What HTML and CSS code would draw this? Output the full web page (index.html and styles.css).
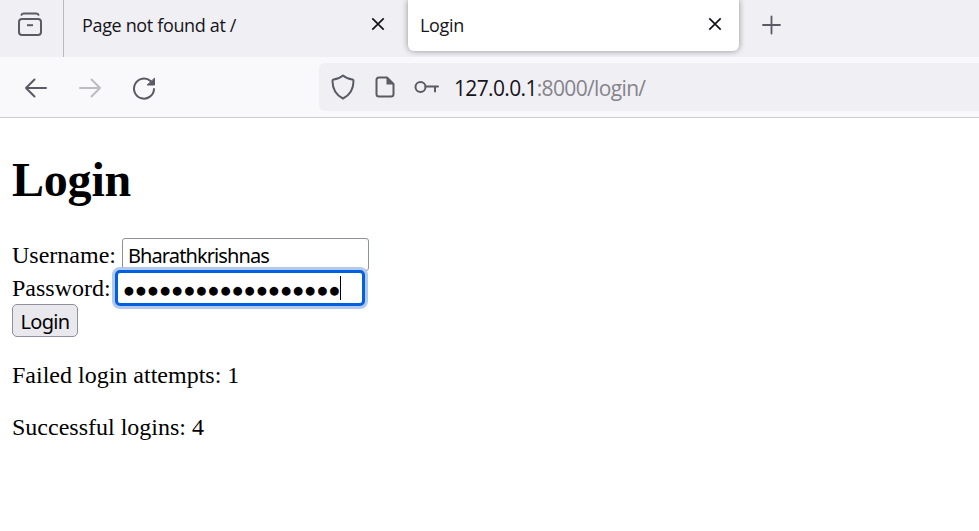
FILE: index.html
```html
<!DOCTYPE html>
<html lang="en">
<head>
<meta charset="utf-8">
<title>Login</title>
<link rel="stylesheet" href="styles.css">
</head>
<body>
<div class="tabs">
  <div class="view">
    <svg width="26" height="26" viewBox="0 0 26 26" fill="none" stroke="#5b5b66" stroke-width="2" stroke-linecap="round"><path d="M4.500 3.800Q5 2.500 6.800 2.500H19.200Q21 2.500 21.500 3.800"/><rect x="2" y="8" width="22" height="16" rx="3"/><path d="M10 14.200H16" stroke-linecap="butt"/></svg>
  </div>
  <div class="tab"><span class="t1">Page not found at /</span>
    <svg class="x" width="14" height="14" viewBox="0 0 14 14"><path d="M1.300 1.300L12.700 12.700M12.700 1.300L1.300 12.700"/></svg>
  </div>
  <div class="tab active"><span class="t2">Login</span>
    <svg class="x" width="14" height="14" viewBox="0 0 14 14"><path d="M1.300 1.300L12.700 12.700M12.700 1.300L1.300 12.700"/></svg>
  </div>
  <svg class="plus" width="20" height="20" viewBox="0 0 20 20" stroke="#5b5b66" stroke-width="1.8" stroke-linecap="round"><path d="M10.500 1.500V18.500M2 10H19"/></svg>
</div>
<div class="toolbar">
  <svg class="nav" width="24" height="24" viewBox="0 0 24 24"><path d="M22 12H2M10.500 3.500L2 12L10.500 20.500"/></svg>
  <svg class="nav off" width="24" height="24" viewBox="0 0 24 24"><path d="M2 12H22M13.500 3.500L22 12L13.500 20.500"/></svg>
  <svg class="nav" width="24" height="24" viewBox="0 0 24 24"><path d="M22 13A10 10 0 1 1 18.600 5.100"/><path d="M22.500 2.500V9H15.500Z" fill="#5b5b66" stroke-width="1"/></svg>
  <div class="url">
    <svg class="shield" width="24" height="26" viewBox="0 0 24 26"><path d="M12 1.500C9.500 3.800 6 5.100 2.500 5.500Q1.500 5.700 1.500 7C1.500 15 5 21 12 24.500C19 21 22.500 15 22.500 7Q22.500 5.700 21.500 5.500C18 5.100 14.500 3.800 12 1.500Z"/></svg>
    <svg class="page" width="20" height="22" viewBox="0 0 20 22"><path d="M4 1.500H12L18.500 8V18Q18.500 20.500 16 20.500H4Q1.500 20.500 1.500 18V4Q1.500 1.500 4 1.500Z"/><path d="M11.500 1V8.500H19Z" fill="#5b5b66" stroke="none"/></svg>
    <svg class="key" width="26" height="14" viewBox="0 0 26 14"><circle cx="6.500" cy="7" r="5"/><path d="M11.500 6.500H24M21 6.500V11.500"/></svg>
    <span class="addr"><b>127.0.0.1</b>:8000/login/</span>
  </div>
</div>
<main>
  <h1>Login</h1>
  <form>
    <div class="row"><label for="u">Username:</label><input id="u" class="user" type="text" value="Bharathkrishnas"></div>
    <div class="row"><span>Password:</span><div class="pass"><span class="dots">●●●●●●●●●●●●●●●●●●</span><i class="caret"></i></div></div>
    <button type="button">Login</button>
  </form>
  <p>Failed login attempts: 1</p>
  <p>Successful logins: 4</p>
</main>
</body>
</html>
```
FILE: styles.css
```css
* { box-sizing: border-box; }
body { margin: 0; background: #fff; height: 531px; overflow: hidden; font: 24px/27px "Liberation Serif", serif; color: #000; }
svg { display: block; flex: none; fill: none; }
.tabs { height: 57px; background: #f0eff4; display: flex; font: 18px/24px "Open Sans", sans-serif; color: #15141a; overflow: hidden; }
.view { width: 64px; height: 57px; border-right: 1px solid #b9b8c0; padding: 11px 0 0 17px; }
.tab { width: 332px; height: 51px; margin-right: 12px; padding: 0 11px 3px 18px; display: flex; align-items: center; justify-content: space-between; }
.tab.active { width: 331px; background: #fff; border-radius: 0 0 6px 6px; box-shadow: 0 0 6px rgba(0,0,0,.4); padding: 0 17px 3px 12px; }
.t1, .t2 { letter-spacing: -.35px; padding-top: 1px; }
.x { stroke: #15141a; stroke-width: 1.7; }
.plus { margin: 15px 0 0 10px; }
.toolbar { height: 61px; background: #f9f9fb; border-bottom: 1px solid #ccccd0; padding: 6px 0 6px 24px; display: flex; align-items: center; gap: 30px; }
.nav { stroke: #5b5b66; stroke-width: 2; stroke-linecap: round; stroke-linejoin: round; margin-top: 2px; }
.off { stroke: #bcbcc4; }
.url { flex: 1; height: 48px; margin-left: 133px; background: #f0eff4; border-radius: 6px 0 0 6px; display: flex; align-items: center; padding-left: 12px; }
.url svg { stroke: #5b5b66; stroke-width: 2; stroke-linejoin: round; stroke-linecap: round; }
.page { margin-left: 20px; }
.key { margin-left: 19px; }
.addr { margin-left: 14px; font: 21px/30px "Open Sans", sans-serif; letter-spacing: -.65px; color: #85848b; padding-top: 2px; }
.addr b { font-weight: 400; color: #15141a; }
main { padding: 35px 12px 0; }
h1 { font-size: 48px; line-height: 54px; margin: 0 0 31px; font-weight: 700; letter-spacing: -.2px; }
.row { display: flex; height: 33px; align-items: center; }
.row label, .row > span { padding-top: 2px; }
.user { width: 247px; height: 33px; margin: 0 0 0 6px; border: 1px solid #8f8f9d; border-radius: 3px; padding: 2px 5px 0; font: 20px "Noto Sans", sans-serif; letter-spacing: -.9px; outline: none; background: #fff; color: #000; }
.pass { width: 250px; height: 36px; margin-left: 4px; border: 3px solid #0060df; border-radius: 5px; box-shadow: 0 0 0 3px #b2c9ee; background: #fff; display: flex; align-items: center; padding-left: 6px; position: relative; }
.dots { font: 11.5px/20px "DejaVu Sans", sans-serif; letter-spacing: 2.06px; white-space: nowrap; width: 216px; padding-top: 4px; }
.caret { width: 1px; height: 24px; background: #000; flex: none; }
button { display: block; width: 66px; height: 33px; margin: 0; padding: 1px 0 0; border: 1px solid #8f8f9d; border-radius: 5px; background: #e9e9ed; font: 20px "Noto Sans", sans-serif; letter-spacing: -.7px; color: #000; }
p { margin: 25px 0; }
```
